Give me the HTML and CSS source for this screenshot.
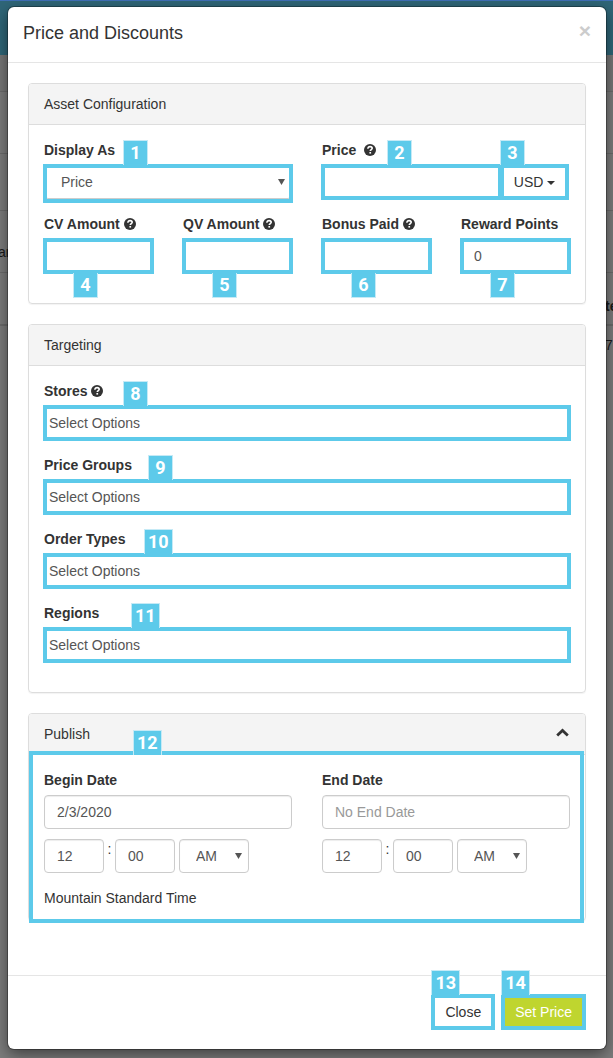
FILE: index.html
```html
<!DOCTYPE html>
<html lang="en">
<head>
<meta charset="utf-8">
<meta name="viewport" content="width=device-width, initial-scale=1">
<title>Price and Discounts</title>
<link rel="stylesheet" href="styles.css">
</head>
<body>
<svg class="sprite" aria-hidden="true">
  <symbol id="help" viewBox="0 0 12 12">
    <circle cx="6" cy="6" r="6" fill="currentColor"/>
    <path d="M3.9 4.7C3.9 3.2 4.8 2.6 6.1 2.6c1.3 0 2.1.7 2.1 1.7 0 1.4-1.9 1.4-1.9 2.8" fill="none" stroke="#fff" stroke-width="1.6"/>
    <path d="M5.4 8h1.7v1.6H5.4z" fill="#fff"/>
  </symbol>
  <symbol id="arrow" viewBox="0 0 7 6"><path d="M0 0h7L3.5 6z" fill="currentColor"/></symbol>
</svg>

<div class="backdrop" aria-hidden="true">
  <div class="bar"></div>
  <div class="row row-nav"></div>
  <div class="row row-tall"></div>
  <div class="row row-mid"></div>
  <div class="row row-tall"><span>ar</span></div>
  <div class="row row-head"><b>te</b></div>
  <div class="row row-last"><span>7</span></div>
</div>

<main class="modal" role="dialog" aria-labelledby="title">
  <header class="modal-header">
    <h1 id="title">Price and Discounts</h1>
    <button class="dismiss" type="button" aria-label="Dismiss">×</button>
  </header>

  <form class="modal-body">
    <section class="panel">
      <h2 class="panel-heading">Asset Configuration</h2>
      <div class="panel-body">
        <div class="halves">
          <div class="field">
            <label for="display">Display As</label>
            <div class="control tall marked">
              <select id="display"><option>Price</option></select>
              <svg class="arrow"><use href="#arrow"/></svg>
              <span class="tag at-80">1</span>
            </div>
          </div>
          <div class="field">
            <label for="price">Price <svg class="help spaced"><use href="#help"/></svg></label>
            <div class="price-group">
              <div class="control marked"><input id="price" type="text"><span class="tag at-65">2</span></div>
              <div class="control marked">
                <button class="currency" type="button">USD <svg class="caret" viewBox="0 0 8 4"><path d="M0 0h8L4 4z" fill="currentColor"/></svg></button>
                <span class="tag at-0">3</span>
              </div>
            </div>
          </div>
        </div>
        <div class="quarters">
          <div class="field">
            <label for="cv">CV Amount <svg class="help"><use href="#help"/></svg></label>
            <div class="control marked"><input id="cv" type="text"><span class="tag below">4</span></div>
          </div>
          <div class="field">
            <label for="qv">QV Amount <svg class="help"><use href="#help"/></svg></label>
            <div class="control marked"><input id="qv" type="text"><span class="tag below">5</span></div>
          </div>
          <div class="field">
            <label for="bonus">Bonus Paid <svg class="help"><use href="#help"/></svg></label>
            <div class="control marked"><input id="bonus" type="text"><span class="tag below">6</span></div>
          </div>
          <div class="field">
            <label for="reward">Reward Points</label>
            <div class="control marked"><input id="reward" type="text" value="0"><span class="tag below">7</span></div>
          </div>
        </div>
      </div>
    </section>

    <section class="panel">
      <h2 class="panel-heading">Targeting</h2>
      <div class="panel-body">
        <div class="field">
          <label for="stores">Stores <svg class="help"><use href="#help"/></svg></label>
          <div class="control marked"><input class="multi" id="stores" type="text" placeholder="Select Options"><span class="tag at-80">8</span></div>
        </div>
        <div class="field">
          <label for="groups">Price Groups</label>
          <div class="control marked"><input class="multi" id="groups" type="text" placeholder="Select Options"><span class="tag at-105">9</span></div>
        </div>
        <div class="field">
          <label for="orders">Order Types</label>
          <div class="control marked"><input class="multi" id="orders" type="text" placeholder="Select Options"><span class="tag at-100">10</span></div>
        </div>
        <div class="field">
          <label for="regions">Regions</label>
          <div class="control marked"><input class="multi" id="regions" type="text" placeholder="Select Options"><span class="tag at-88">11</span></div>
        </div>
      </div>
    </section>

    <section class="panel">
      <h2 class="panel-heading">Publish
        <button class="collapse" type="button" aria-label="Collapse"><svg viewBox="0 0 13 9"><path d="M1.2 7.4l5.3-5 5.3 5" fill="none" stroke="currentColor" stroke-width="2.8"/></svg></button>
      </h2>
      <div class="panel-body publish marked">
        <span class="tag at-105">12</span>
        <div class="halves">
          <div class="date">
            <label for="begin">Begin Date</label>
            <div class="control"><input id="begin" type="text" value="2/3/2020"></div>
            <div class="time">
              <input type="text" value="12" aria-label="Begin hour"><span>:</span><input type="text" value="00" aria-label="Begin minute">
              <div class="control ampm"><select aria-label="Begin AM or PM"><option>AM</option><option>PM</option></select><svg class="arrow"><use href="#arrow"/></svg></div>
            </div>
            <p>Mountain Standard Time</p>
          </div>
          <div class="date">
            <label for="end">End Date</label>
            <div class="control"><input id="end" type="text" placeholder="No End Date"></div>
            <div class="time">
              <input type="text" value="12" aria-label="End hour"><span>:</span><input type="text" value="00" aria-label="End minute">
              <div class="control ampm"><select aria-label="End AM or PM"><option>AM</option><option>PM</option></select><svg class="arrow"><use href="#arrow"/></svg></div>
            </div>
          </div>
        </div>
      </div>
    </section>
  </form>

  <footer class="modal-footer">
    <div class="control marked"><button class="btn" type="button">Close</button><span class="tag at-0">13</span></div>
    <div class="control marked"><button class="btn primary" type="button">Set Price</button><span class="tag at-0">14</span></div>
  </footer>
</main>
</body>
</html>
```
FILE: styles.css
```css
* { box-sizing: border-box; }

body {
  margin: 0;
  padding: 7px 7px 9px 8px;
  background: #7c7c7c;
  color: #333;
  font: 14px/20px "Liberation Sans", Arial, sans-serif;
}

.sprite { position: absolute; width: 0; height: 0; }

/* Dimmed page behind the dialog */
.backdrop {
  position: absolute;
  inset: 0;
  overflow: hidden;
  color: #1a1a1a;
}
.bar { height: 55px; background: #2f6678; border-top: 1px solid #3f6fb5; }
.row { display: flex; align-items: center; border-bottom: 1px solid #6b6b6b; }
.row-nav { height: 37px; background: #777; }
.row-tall { height: 62px; }
.row-mid { height: 57px; }
.row-tall span { margin: 20px 0 0 -2px; }
.row-head { height: 53px; border-bottom-width: 2px; justify-content: flex-end; }
.row-head b { width: 8px; margin-top: 14px; }
.row-last { height: 37px; justify-content: flex-end; border: 0; }
.row-last span { width: 8px; }

.modal {
  position: relative;
  background: #fff;
  border-radius: 6px;
  box-shadow: 0 0 0 1px rgba(0, 0, 0, .3), 0 5px 15px rgba(0, 0, 0, .5);
}

.modal-header {
  display: flex;
  align-items: center;
  justify-content: space-between;
  height: 56px;
  padding: 0 15px 3px;
  border-bottom: 1px solid #e5e5e5;
}
h1 { margin: 0; font-size: 18px; font-weight: 400; }
.dismiss {
  padding: 0 0 6px;
  border: 0;
  background: none;
  color: #ccc;
  font: bold 21px/21px "Liberation Sans", Arial, sans-serif;
}

.modal-body { display: grid; gap: 20px; padding: 20px 20px 54px; }
.panel {
  min-width: 0;
  border: 1px solid #ddd;
  border-radius: 4px;
  box-shadow: 0 1px 1px rgba(0, 0, 0, .05);
}
.panel-heading {
  display: flex;
  justify-content: space-between;
  margin: 0;
  padding: 10px 15px;
  border-bottom: 1px solid #ddd;
  border-radius: 3px 3px 0 0;
  background: #f4f4f4;
  font-size: 14px;
  font-weight: 400;
}
.panel-body { padding: 15px; }

.halves { display: grid; grid-template-columns: 1fr 1fr; gap: 30px; }
.quarters { display: grid; grid-template-columns: repeat(4, 1fr); gap: 30px; }
.field { min-width: 0; margin-bottom: 15px; }
label { display: block; margin-bottom: 5px; font-weight: 700; white-space: nowrap; }
.help { width: 12px; height: 12px; vertical-align: -1px; }
.spaced { margin-left: 4px; }

.control { position: relative; }
input, select {
  display: block;
  width: 100%;
  height: 34px;
  margin: 0;
  padding: 6px 12px;
  border: 1px solid #ccc;
  border-radius: 4px;
  background: #fff;
  box-shadow: inset 0 1px 1px rgba(0, 0, 0, .075);
  color: #555;
  font: inherit;
}
select { appearance: none; padding-left: 16px; }
input::placeholder { color: #999; opacity: 1; }
.multi { padding: 6px 4px; }
.multi::placeholder { color: #555; }
.arrow {
  position: absolute;
  top: 14px;
  right: 7px;
  width: 7px;
  height: 6px;
  color: #555;
  pointer-events: none;
}

.price-group { display: grid; grid-template-columns: 1fr 67px; margin-right: 2px; }
.currency {
  width: 100%;
  height: 34px;
  padding: 0;
  border: 1px solid #ccc;
  background: #fff;
  color: #333;
  font: inherit;
}
.caret { width: 8px; height: 4px; vertical-align: 2px; }

/* Numbered callouts laid over the controls */
.marked::after {
  content: "";
  position: absolute;
  inset: -1px;
  border: 4px solid #5dcaea;
  pointer-events: none;
}
.tall::after { bottom: -4px; }
.tag {
  position: absolute;
  bottom: 100%;
  z-index: 1;
  min-width: 25px;
  height: 25px;
  padding: 0 3px;
  border: 1px solid #c5eaf6;
  border-bottom: 0;
  background: #5dcaea;
  color: #fff;
  font-family: Roboto, "Liberation Sans", sans-serif;
  font-size: 18px;
  font-weight: 700;
  line-height: 23px;
  text-align: center;
}
.below { top: 100%; bottom: auto; left: 29px; border: 1px solid #c5eaf6; border-top: 0; }
.at-0 { left: -1px; }
.at-65 { left: 65px; }
.at-80 { left: 79px; }
.at-88 { left: 87px; }
.at-100 { left: 100px; }
.at-105 { left: 104px; }

.collapse { padding: 0; border: 0; background: none; color: #333; line-height: 0; }
.collapse svg { display: block; width: 13px; height: 9px; margin: 0 1px 4px; }

.publish { position: relative; padding-bottom: 12px; }
.publish::after { inset: -4px 1px -3px 0; }
.publish p { margin: 15px 0 0; }
.time { display: flex; margin-top: 10px; }
.time > input { width: 60px; }
.time > span { width: 11px; text-align: center; }
.ampm { width: 70px; margin-left: 4px; }

.modal-footer {
  display: flex;
  justify-content: flex-end;
  gap: 8px;
  padding: 19px 21px 20px;
  border-top: 1px solid #e5e5e5;
}
.btn {
  display: block;
  height: 34px;
  padding: 0 13px;
  border: 0;
  background: #fff;
  color: #333;
  font: inherit;
}
.primary { background: #bfd52f; color: #fff; }
```
